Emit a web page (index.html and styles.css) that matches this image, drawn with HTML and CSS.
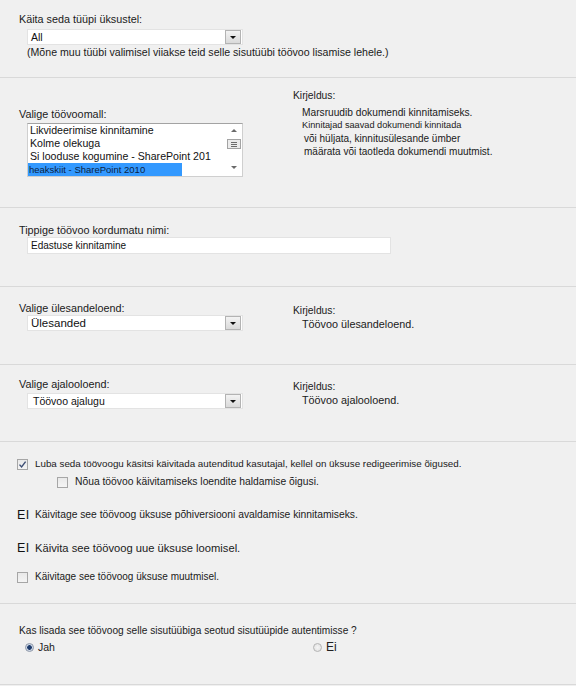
FILE: index.html
```html
<!DOCTYPE html>
<html lang="et">
<head>
<meta charset="utf-8">
<title>Töövoo lisamine</title>
<link rel="stylesheet" href="styles.css">
</head>
<body>
<div class="page">
  <section class="sec s1">
    <div class="lbl">Käita seda tüüpi üksustel:</div>
    <div class="select ctl"><span class="val">All</span><span class="btn"></span></div>
    <div class="note ctl">(Mõne muu tüübi valimisel viiakse teid selle sisutüübi töövoo lisamise lehele.)</div>
  </section>

  <section class="sec s2 cols">
    <div class="left">
      <div class="lbl">Valige töövoomall:</div>
      <div class="listbox ctl">
        <div class="items">
          <div class="item">Likvideerimise kinnitamine</div>
          <div class="item">Kolme olekuga</div>
          <div class="item">Si looduse kogumine - SharePoint 201</div>
          <div class="item sel"><span>heakskiit - SharePoint 2010</span></div>
        </div>
        <div class="scroll">
          <span class="arr up"></span>
          <span class="thumb"><i></i><i></i><i></i></span>
          <span class="arr down"></span>
        </div>
      </div>
    </div>
    <div class="right">
      <div class="desc-h">Kirjeldus:</div>
      <div class="desc">
        <div class="d1">Marsruudib dokumendi kinnitamiseks.</div>
        <div class="d2">Kinnitajad saavad dokumendi kinnitada</div>
        <div class="d3">või hüljata, kinnitusülesande ümber</div>
        <div class="d3">määrata või taotleda dokumendi muutmist.</div>
      </div>
    </div>
  </section>

  <section class="sec s3">
    <div class="lbl">Tippige töövoo kordumatu nimi:</div>
    <div class="input ctl">Edastuse kinnitamine</div>
  </section>

  <section class="sec s4 cols">
    <div class="left">
      <div class="lbl">Valige ülesandeloend:</div>
      <div class="select ctl"><span class="val big">Ülesanded</span><span class="btn"></span></div>
    </div>
    <div class="right">
      <div class="desc-h">Kirjeldus:</div>
      <div class="desc one">Töövoo ülesandeloend.</div>
    </div>
  </section>

  <section class="sec s5 cols">
    <div class="left">
      <div class="lbl">Valige ajalooloend:</div>
      <div class="select ctl"><span class="val hist">Töövoo ajalugu</span><span class="btn"></span></div>
    </div>
    <div class="right">
      <div class="desc-h">Kirjeldus:</div>
      <div class="desc one">Töövoo ajalooloend.</div>
    </div>
  </section>

  <section class="sec s6">
    <div class="row r1">
      <span class="cb checked"><svg viewBox="0 0 9 9" width="9" height="9"><path d="M1.5 4.6 L3.6 7 L7.6 1.6" fill="none" stroke="#3d4e74" stroke-width="1.4"/></svg></span>
      <span class="txt">Luba seda töövoogu käsitsi käivitada autenditud kasutajal, kellel on üksuse redigeerimise õigused.</span>
    </div>
    <div class="row r2">
      <span class="cb"></span>
      <span class="txt">Nõua töövoo käivitamiseks loendite haldamise õigusi.</span>
    </div>
    <div class="row r3">
      <span class="ei">EI</span>
      <span class="txt">Käivitage see töövoog üksuse põhiversiooni avaldamise kinnitamiseks.</span>
    </div>
    <div class="row r4">
      <span class="ei">EI</span>
      <span class="txt big">Käivita see töövoog uue üksuse loomisel.</span>
    </div>
    <div class="row r5">
      <span class="cb"></span>
      <span class="txt">Käivitage see töövoog üksuse muutmisel.</span>
    </div>
  </section>

  <section class="sec s7">
    <div class="q">Kas lisada see töövoog selle sisutüübiga seotud sisutüüpide autentimisse ?</div>
    <div class="radios">
      <label class="opt"><span class="radio on"></span><span>Jah</span></label>
      <label class="opt ei-opt"><span class="radio"></span><span>Ei</span></label>
    </div>
  </section>
</div>
</body>
</html>
```

FILE: styles.css
```css
* { box-sizing: border-box; }

body {
  margin: 0;
  background: #f0f0f0;
  font-family: "Liberation Sans", Arial, sans-serif;
  font-size: 10.5px;
  line-height: 14px;
  color: #202020;
}

.page { width: 576px; height: 686px; overflow: hidden; }

.sec {
  border-bottom: 1px solid #d9d9d9;
  padding-left: 19px;
}

.s1 { height: 78px; padding-top: 12px; }
.s2 { height: 130px; }
.s3 { height: 79px; padding-top: 15px; }
.s4 { height: 78px; }
.s5 { height: 77px; }
.s6 { height: 162px; padding-left: 17px; padding-top: 15px; }
.s7 { height: 81px; padding-top: 20px; }

.lbl { font-size: 10.8px; }

.cols { display: flex; align-items: flex-start; }
.left { width: 274px; flex: none; }
.right { flex: 1; }

.s2 .left { padding-top: 29px; }
.s2 .right { padding-top: 11px; }
.s4 .left { padding-top: 14px; }
.s4 .right { padding-top: 17px; }
.s5 .left { padding-top: 12px; }
.s5 .right { padding-top: 15px; }

.ctl { margin-left: 8px; }

/* dropdown select */
.select {
  width: 216px;
  height: 16px;
  background: #fff;
  border: 1px solid #e3e3e3;
  display: flex;
  align-items: center;
}
.s1 .select { margin-top: 3px; }
.s5 .select { margin-top: 2px; }
.select .val { flex: 1; padding-left: 3px; font-size: 10.5px; color: #111; }
.select .val.big { font-size: 11.5px; }
.select .val.hist { font-size: 10.5px; padding-left: 5px; }
.select .btn {
  width: 16px;
  height: 14px;
  margin-right: 1px;
  background: linear-gradient(#f3f3f3, #dadada);
  border: 1px solid #b3b3b3;
  display: flex;
  align-items: center;
  justify-content: center;
}
.select .btn::after {
  content: "";
  border-left: 3px solid transparent;
  border-right: 3px solid transparent;
  border-top: 3px solid #111;
}

.note { font-size: 10.6px; color: #1a1a1a; white-space: nowrap; }

/* list box */
.listbox {
  margin-top: 2px;
  width: 216px;
  height: 54px;
  background: #fff;
  border: 1px solid #cfcfcf;
  border-top-color: #a3a3a3;
  display: flex;
}
.items { flex: 1; }
.item {
  height: 13px;
  line-height: 13px;
  font-size: 10.6px;
  padding-left: 2px;
  color: #111;
  white-space: nowrap;
}
.item.sel { padding-left: 0; }
.item.sel span {
  display: block;
  width: 154px;
  background: #3399ff;
  color: #0b1f3f;
  font-size: 9.5px;
  padding-left: 1px;
}
.scroll {
  width: 17px;
  display: flex;
  flex-direction: column;
  align-items: center;
  padding-top: 5px;
}
.arr { width: 0; height: 0; border-left: 3px solid transparent; border-right: 3px solid transparent; }
.arr.up { border-bottom: 3px solid #6a6a6a; }
.arr.down { border-top: 3px solid #6a6a6a; margin-top: 17px; }
.thumb {
  margin-top: 7px;
  width: 14px;
  height: 10px;
  border: 1px solid #a3a3a3;
  background: #ececec;
  display: flex;
  flex-direction: column;
  justify-content: center;
  align-items: center;
  gap: 1px;
}
.thumb i { display: block; width: 6px; height: 1px; background: #6d6d6d; }

/* description */
.desc-h { font-size: 10.3px; }
.desc { padding-left: 9px; margin-top: 3px; }
.desc div { line-height: 13px; white-space: nowrap; }
.desc .d1 { font-size: 10.2px; }
.desc .d2 { font-size: 9.2px; }
.desc .d3 { font-size: 10px; padding-left: 2px; }
.desc.one { margin-top: 0; font-size: 10.8px; line-height: 13px; }

/* text input */
.input {
  width: 364px;
  height: 17px;
  background: #fff;
  border: 1px solid #e3e3e3;
  padding-left: 3px;
  font-size: 10px;
  line-height: 15px;
  color: #111;
}

/* checkbox rows */
.row { display: flex; align-items: center; height: 14px; }
.r1 { margin-bottom: 4px; }
.r2 { margin-left: 40px; margin-bottom: 19px; }
.r3 { margin-bottom: 19px; }
.r4 { margin-bottom: 15px; }
.txt { font-size: 10px; white-space: nowrap; }
.r1 .txt { font-size: 9.8px; }
.r3 .txt { font-size: 10.3px; }
.txt.big { font-size: 11.2px; }
.r2 .txt { font-size: 10.3px; }
.cb {
  width: 11px;
  height: 11px;
  margin-right: 7px;
  border: 1px solid #a6a6a6;
  background: linear-gradient(#e9e9e9, #f4f4f4);
  display: flex;
  align-items: center;
  justify-content: center;
  flex: none;
}
.ei {
  width: 18px;
  font-size: 12.5px;
  letter-spacing: 0.5px;
  color: #111;
  flex: none;
}

/* radio */
.q { font-size: 10.15px; }
.radios {
  margin-top: 2px;
  padding-left: 6px;
  display: grid;
  grid-template-columns: 288px auto;
}
.opt { display: flex; align-items: center; gap: 4px; height: 14px; }
.opt span:last-child { font-size: 10.5px; }
.ei-opt span:last-child { font-size: 12px; }
.radio {
  width: 9px;
  height: 9px;
  border-radius: 50%;
  border: 1px solid #b4b4b4;
  background: radial-gradient(#f5f5f5, #dedede);
  flex: none;
}
.radio.on {
  border-color: #8d97a8;
  background: radial-gradient(circle, #1e3c6c 0, #1e3c6c 2px, #c9d4e4 2.6px, #e8ecf2 100%);
}
```
